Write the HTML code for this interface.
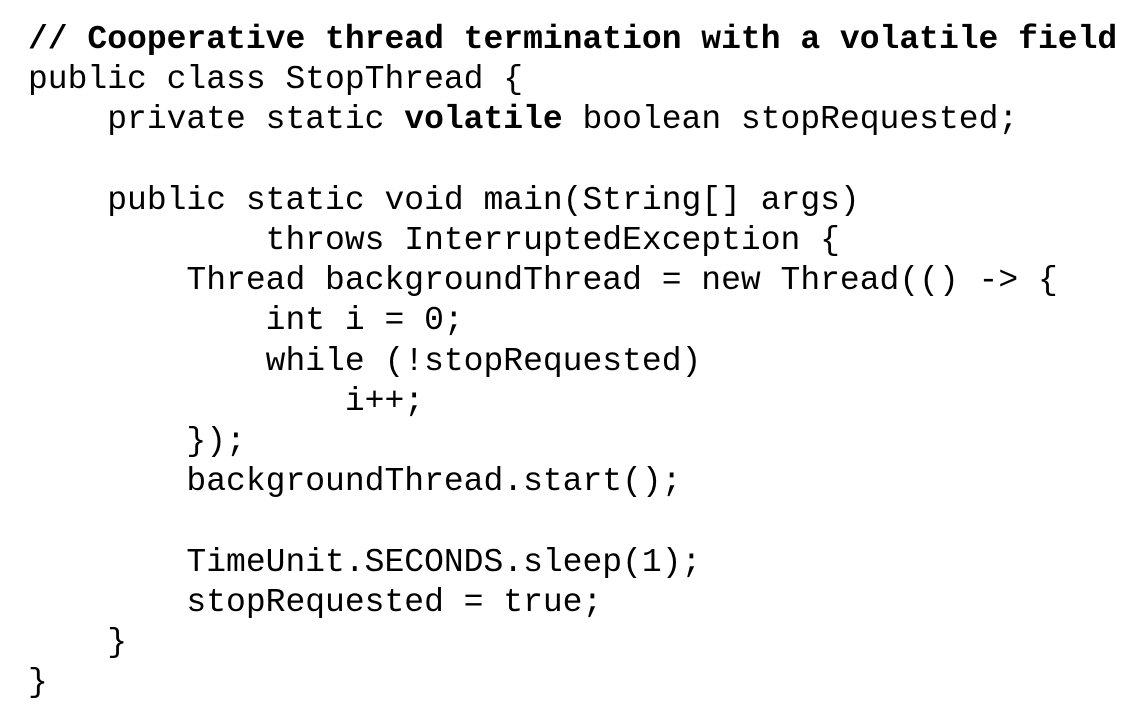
<!DOCTYPE html>
<html><head><style>
html,body{margin:0;padding:0;background:#fff;width:1138px;height:721px;overflow:hidden}
pre{margin:0;position:absolute;left:28px;top:20px;font-family:"Liberation Mono",monospace;font-size:33px;line-height:40.2px;color:#000}
b{font-weight:bold}
</style></head><body>
<pre><b>// Cooperative thread termination with a volatile field</b>
public class StopThread {
    private static <b>volatile</b> boolean stopRequested;

    public static void main(String[] args)
            throws InterruptedException {
        Thread backgroundThread = new Thread(() -> {
            int i = 0;
            while (!stopRequested)
                i++;
        });
        backgroundThread.start();

        TimeUnit.SECONDS.sleep(1);
        stopRequested = true;
    }
}</pre>
</body></html>
